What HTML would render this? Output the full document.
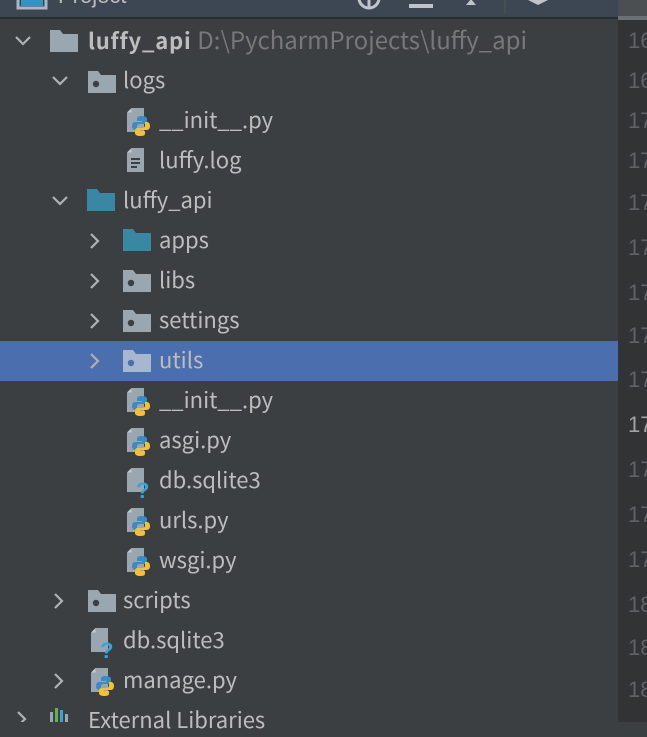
<!DOCTYPE html>
<html><head><meta charset="utf-8"><style>
*{margin:0;padding:0;box-sizing:border-box}
body{width:647px;height:722px;overflow:hidden;background:#3c3f41;position:relative;font-family:"Noto Sans CJK SC","Liberation Sans",sans-serif}
.hdr{position:absolute;left:0;top:0;width:618px;height:19px;background:#3d4753;border-bottom:2px solid #2b2d2f}
.gut{position:absolute;left:618px;top:0;width:29px;height:722px;background:#313335}
.gtop{position:absolute;left:618px;top:0;width:29px;height:20px;background:#4c4f51;border-bottom:4px solid #6e7174}
.ln{position:absolute;left:628px;font-size:22px;color:#606366;line-height:40px;height:40px;font-family:"Liberation Sans",sans-serif}
.row{position:absolute;left:0;width:618px;height:40px}
.sel{background:#4b6eaf}
.t{position:absolute;top:0;line-height:36px;font-size:22px;color:#bdbdbd;white-space:nowrap}
svg{position:absolute}
</style></head><body>
<div class="hdr">
<svg width="618" height="19" style="left:0;top:0">
<rect x="18" y="-4" width="28" height="12" fill="none" stroke="#a9b7c6" stroke-width="3"/>
<rect x="21" y="-2" width="22" height="8" fill="#3592c4"/>
<text x="58" y="3" font-size="22" fill="#bbbbbb" font-family="Liberation Sans">Project</text>
<circle cx="369" cy="-2" r="10" fill="none" stroke="#c0c4c8" stroke-width="3"/>
<line x1="369" y1="-2" x2="369" y2="8" stroke="#c0c4c8" stroke-width="3"/>
<rect x="409" y="4" width="24" height="4" fill="#c0c4c8"/>
<polygon points="466,5 476,5 471,-1" fill="#c0c4c8"/>
<line x1="505" y1="0" x2="505" y2="13" stroke="#555" stroke-width="1"/>
<polygon points="528,0 548,0 538,5" fill="#c0c4c8"/>
</svg>
</div>
<div class="gut"></div><div class="gtop"></div>
<div class="row sel" style="top:341px"></div>

<svg width="618" height="722" style="left:0;top:0">
<defs>
<g id="fold"><path d="M0 0h10l3 4h15v18h-28z" fill="#9aa7b0"/></g>
<g id="foldd"><path d="M0 0h10l3 4h15v18h-28z" fill="#9aa7b0"/><circle cx="8" cy="13" r="3.2" fill="#3c3f41"/></g>
<g id="foldb"><path d="M0 0h10l3 4h15v18h-28z" fill="#3a87a3"/></g>
<g id="page"><path d="M5 0h12v24h-17v-19z" fill="#9aa7b0"/><path d="M0 4.5l4.5-4.5v4.5z" fill="#c5ccd2"/></g>
<g id="py"><use href="#page"/><path d="M14 8c-4 0-4 2-4 3v2h5v1h-7c-2 0-3 2-3 4s1 4 3 4h2v-3c0-2 1-3 3-3h4c2 0 3-1 3-3v-2c0-2-2-3-6-3z" fill="#3b8cc5"/><path d="M14 28c4 0 4-2 4-3v-2h-5v-1h7c2 0 3-2 3-4s-1-4-3-4h-2v3c0 2-1 3-3 3h-4c-2 0-3 1-3 3v2c0 2 2 3 6 3z" fill="#f2c32e"/></g>
<g id="q"><use href="#page"/><text x="9" y="30" font-size="22" font-weight="bold" fill="#3aa3d9" font-family="Liberation Sans">?</text></g>
<g id="log"><use href="#page"/><rect x="4" y="10" width="9" height="2" fill="#3c3f41"/><rect x="4" y="14" width="9" height="2" fill="#3c3f41"/><rect x="4" y="18" width="6" height="2" fill="#3c3f41"/></g>
<polyline id="dn" points="0,0 7,7 14,0" fill="none" stroke="#aeb2b5" stroke-width="2.2"/>
<polyline id="rt" points="0,0 7,7 0,14" fill="none" stroke="#aeb2b5" stroke-width="2.2"/>
</defs>
<use href="#dn" x="16" y="37"/><use href="#fold" x="50" y="30"/>
<use href="#dn" x="53" y="77"/><use href="#foldd" x="88" y="71"/>
<use href="#py" x="127" y="108"/>
<use href="#log" x="127" y="148"/>
<use href="#dn" x="53" y="197"/><use href="#foldb" x="87" y="189"/>
<use href="#rt" x="91" y="234"/><use href="#foldb" x="123" y="229"/>
<use href="#rt" x="91" y="274"/><use href="#foldd" x="123" y="270"/>
<use href="#rt" x="91" y="314"/><use href="#foldd" x="123" y="310"/>
<use href="#rt" x="91" y="354"/><path d="M0 0h10l3 4h15v18h-28z" fill="#a6b7cf" transform="translate(123,350)"/><circle cx="131" cy="363" r="3.2" fill="#4b6eaf"/>
<use href="#py" x="127" y="388"/>
<use href="#py" x="127" y="428"/>
<use href="#q" x="127" y="468"/>
<use href="#py" x="127" y="508"/>
<use href="#py" x="127" y="548"/>
<use href="#rt" x="55" y="594"/><use href="#foldd" x="88" y="590"/>
<use href="#q" x="91" y="628"/>
<use href="#rt" x="55" y="674"/><use href="#py" x="91" y="668"/>
<polyline points="18,712 25,719 18,726" fill="none" stroke="#aeb2b5" stroke-width="2.2"/>
<rect x="50" y="712" width="3" height="10" fill="#9aa7b0"/><rect x="55" y="708" width="3" height="14" fill="#62b543"/><rect x="60" y="710" width="3" height="12" fill="#3aa3d9"/><rect x="65" y="714" width="3" height="8" fill="#9aa7b0"/>
</svg>

<div class="t" style="left:88px;top:21px;font-weight:bold;letter-spacing:0.8px">luffy_api <span style="font-weight:normal;color:#787878;font-size:24px;letter-spacing:0">D:\PycharmProjects\luffy_api</span></div>
<div class="t" style="left:123px;top:61px">logs</div>
<div class="t" style="left:159px;top:101px">__init__.py</div>
<div class="t" style="left:159px;top:141px">luffy.log</div>
<div class="t" style="left:123px;top:181px">luffy_api</div>
<div class="t" style="left:159px;top:221px">apps</div>
<div class="t" style="left:159px;top:261px">libs</div>
<div class="t" style="left:159px;top:301px">settings</div>
<div class="t" style="left:159px;top:341px">utils</div>
<div class="t" style="left:159px;top:381px">__init__.py</div>
<div class="t" style="left:159px;top:421px">asgi.py</div>
<div class="t" style="left:159px;top:461px">db.sqlite3</div>
<div class="t" style="left:159px;top:501px">urls.py</div>
<div class="t" style="left:159px;top:541px">wsgi.py</div>
<div class="t" style="left:123px;top:581px">scripts</div>
<div class="t" style="left:123px;top:621px">db.sqlite3</div>
<div class="t" style="left:123px;top:661px">manage.py</div>
<div class="t" style="left:88px;top:701px">External Libraries</div>

<div class="ln" style="top:21px">16</div><div class="ln" style="top:61px">16</div>
<div class="ln" style="top:101px">17</div><div class="ln" style="top:141px">17</div>
<div class="ln" style="top:183px">17</div><div class="ln" style="top:228px">17</div>
<div class="ln" style="top:273px">17</div><div class="ln" style="top:316px">17</div>
<div class="ln" style="top:360px">17</div><div class="ln" style="top:405px;color:#a4a3a3">17</div>
<div class="ln" style="top:450px">17</div><div class="ln" style="top:495px">17</div>
<div class="ln" style="top:540px">17</div><div class="ln" style="top:585px">18</div>
<div class="ln" style="top:628px">18</div><div class="ln" style="top:670px">18</div>
</body></html>
